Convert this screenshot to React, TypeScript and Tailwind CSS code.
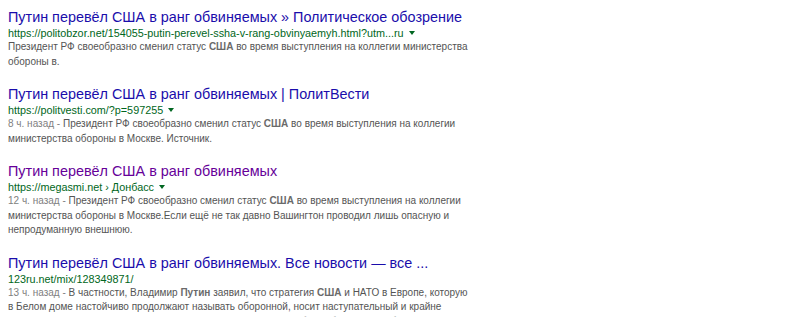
import React from "react";

const Arrow = () => (
  <svg width="6" height="4" viewBox="0 0 6 4" className="ml-[5px] inline-block align-middle" style={{ marginTop: -2 }}>
    <path d="M0 0 L6 0 L3 4 Z" fill="#006621" />
  </svg>
);

const B = ({ children }: { children: React.ReactNode }) => (
  <b className="font-bold text-[#6a6a6a]">{children}</b>
);

const D = ({ children }: { children: React.ReactNode }) => (
  <span className="text-[#808080]">{children}</span>
);

type R = {
  title: string;
  visited?: boolean;
  url: React.ReactNode;
  arrow: boolean;
  lines: React.ReactNode[];
};

const results: R[] = [
  {
    title: "Путин перевёл США в ранг обвиняемых » Политическое обозрение",
    url: "https://politobzor.net/154055-putin-perevel-ssha-v-rang-obvinyaemyh.html?utm...ru",
    arrow: true,
    lines: [
      <>Президент РФ своеобразно сменил статус <B>США</B> во время выступления на коллегии министерства</>,
      <>обороны в.</>,
    ],
  },
  {
    title: "Путин перевёл США в ранг обвиняемых | ПолитВести",
    url: "https://politvesti.com/?p=597255",
    arrow: true,
    lines: [
      <><D>8 ч. назад - </D>Президент РФ своеобразно сменил статус <B>США</B> во время выступления на коллегии</>,
      <>министерства обороны в Москве. Источник.</>,
    ],
  },
  {
    title: "Путин перевёл США в ранг обвиняемых",
    visited: true,
    url: "https://megasmi.net › Донбасс",
    arrow: true,
    lines: [
      <><D>12 ч. назад - </D>Президент РФ своеобразно сменил статус <B>США</B> во время выступления на коллегии</>,
      <>министерства обороны в Москве.Если ещё не так давно Вашингтон проводил лишь опасную и</>,
      <>непродуманную внешнюю.</>,
    ],
  },
  {
    title: "Путин перевёл США в ранг обвиняемых. Все новости — все ...",
    url: "123ru.net/mix/128349871/",
    arrow: false,
    lines: [
      <><D>13 ч. назад - </D>В частности, Владимир <B>Путин</B> заявил, что стратегия <B>США</B> и НАТО в Европе, которую</>,
      <>в Белом доме настойчиво продолжают называть оборонной, носит наступательный и крайне</>,
      <>агрессивный характер. <B>США</B> последовательно стремятся ослабить обороноспособность <B>РФ</B> и</>,
    ],
  },
];

export default function App() {
  return (
    <div
      className="w-[800px] h-[317px] overflow-hidden bg-white pl-[8px] pt-[8px]"
      style={{ fontFamily: '"Liberation Sans", Arial, sans-serif' }}
    >
      {results.map((r, i) => (
        <div key={i} className="mb-[16px]">
          <div
            className={`text-[14.4px] leading-[18px] whitespace-nowrap ${
              r.visited ? "text-[#660099]" : "text-[#1a0dab]"
            }`}
          >
            {r.title}
          </div>
          <div className="text-[10.8px] leading-[14px] text-[#006621] whitespace-nowrap">
            {r.url}
            {r.arrow && <Arrow />}
          </div>
          <div className="text-[10px] leading-[14.5px] text-[#545454]">
            {r.lines.map((l, j) => (
              <div key={j} className="whitespace-nowrap">
                {l}
              </div>
            ))}
          </div>
        </div>
      ))}
    </div>
  );
}
